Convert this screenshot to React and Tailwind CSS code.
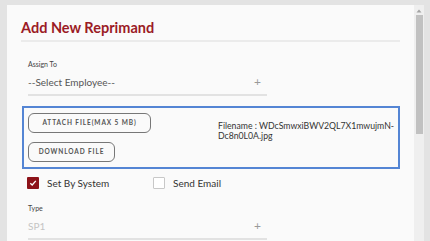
export default function App() {
  const font = { fontFamily: "Lato, 'Open Sans', sans-serif" };
  return (
    <div className="w-[430px] h-[241px] bg-[#e3e3e3] overflow-hidden pt-[5px] pl-[7px] pr-[6px]" style={font}>
      <div className="flex h-[260px] bg-[#fafafa]">
        <div className="flex-1 min-w-0 px-[14px]">
          <div className="pt-[13px] pb-[2px] border-b-2 border-[#ebebeb]">
            <h1 className="text-[14.5px] leading-[20px] font-bold text-[#9b1b25]">Add New Reprimand</h1>
          </div>
          <div className="pl-[7px] pt-[17px]">
            <div className="text-[7px] leading-[10px] text-[#444]">Assign To</div>
            <div className="w-[239px] h-[27px] flex items-center justify-between border-b-2 border-[#e2e2e2] pt-[1px]">
              <span className="text-[10px] text-[#555]">--Select Employee--</span>
              <span className="text-[12px] leading-none text-[#999] pr-[6px]">+</span>
            </div>
          </div>
          <div className="mt-[10px] ml-[1px] h-[63px] border-2 border-[#5485d4] flex pl-[4px] pt-[5px] overflow-hidden">
            <div className="flex flex-col gap-[9px] w-[190px] shrink-0">
              <button className="w-[123px] h-[20px] rounded-[6px] border-[1.5px] border-[#777] text-[6.5px] font-bold tracking-[0.9px] text-[#555] flex items-center justify-center">
                ATTACH FILE(MAX 5 MB)
              </button>
              <button className="w-[87px] h-[20px] rounded-[6px] border-[1.5px] border-[#777] text-[6.5px] font-bold tracking-[0.9px] text-[#555] flex items-center justify-center">
                DOWNLOAD FILE
              </button>
            </div>
            <div className="text-[8.7px] leading-[10px] text-[#333] pt-[8px] whitespace-nowrap">
              Filename : WDcSmwxiBWV2QL7X1mwujmN-<br />Dc8n0L0A.jpg
            </div>
          </div>
          <div className="flex items-center h-[12px] mt-[8px] pl-[6px]">
            <div className="w-[12px] h-[12px] rounded-[1px] bg-[#8c1219] flex items-center justify-center">
              <svg width="8" height="8" viewBox="0 0 8 8" fill="none">
                <path d="M1.3 4.2 L3.2 6 L6.8 1.8" stroke="white" strokeWidth="1.3" />
              </svg>
            </div>
            <span className="ml-[8px] text-[10px] text-[#333] w-[106px]">Set By System</span>
            <div className="w-[12px] h-[12px] rounded-[1px] border border-[#c8c8c8] bg-white"></div>
            <span className="ml-[8px] text-[10px] text-[#333]">Send Email</span>
          </div>
          <div className="pl-[7px] pt-[14px]">
            <div className="text-[7px] leading-[10px] text-[#444]">Type</div>
            <div className="w-[239px] h-[27px] flex items-center justify-between border-b-2 border-[#e2e2e2] pt-[1px]">
              <span className="text-[10px] text-[#c4c4c4]">SP1</span>
              <span className="text-[12px] leading-none text-[#999] pr-[6px]">+</span>
            </div>
          </div>
        </div>
        <div className="w-[10px] shrink-0 bg-[#efefef] flex flex-col items-center">
          <svg width="8" height="8" viewBox="0 0 8 8" className="mt-[2px]">
            <path d="M1.5 5.5 L4 2.5 L6.5 5.5 Z" fill="#a3a3a3" />
          </svg>
          <div className="w-[7px] h-[119px] bg-[#c1c1c1]"></div>
        </div>
      </div>
    </div>
  );
}
